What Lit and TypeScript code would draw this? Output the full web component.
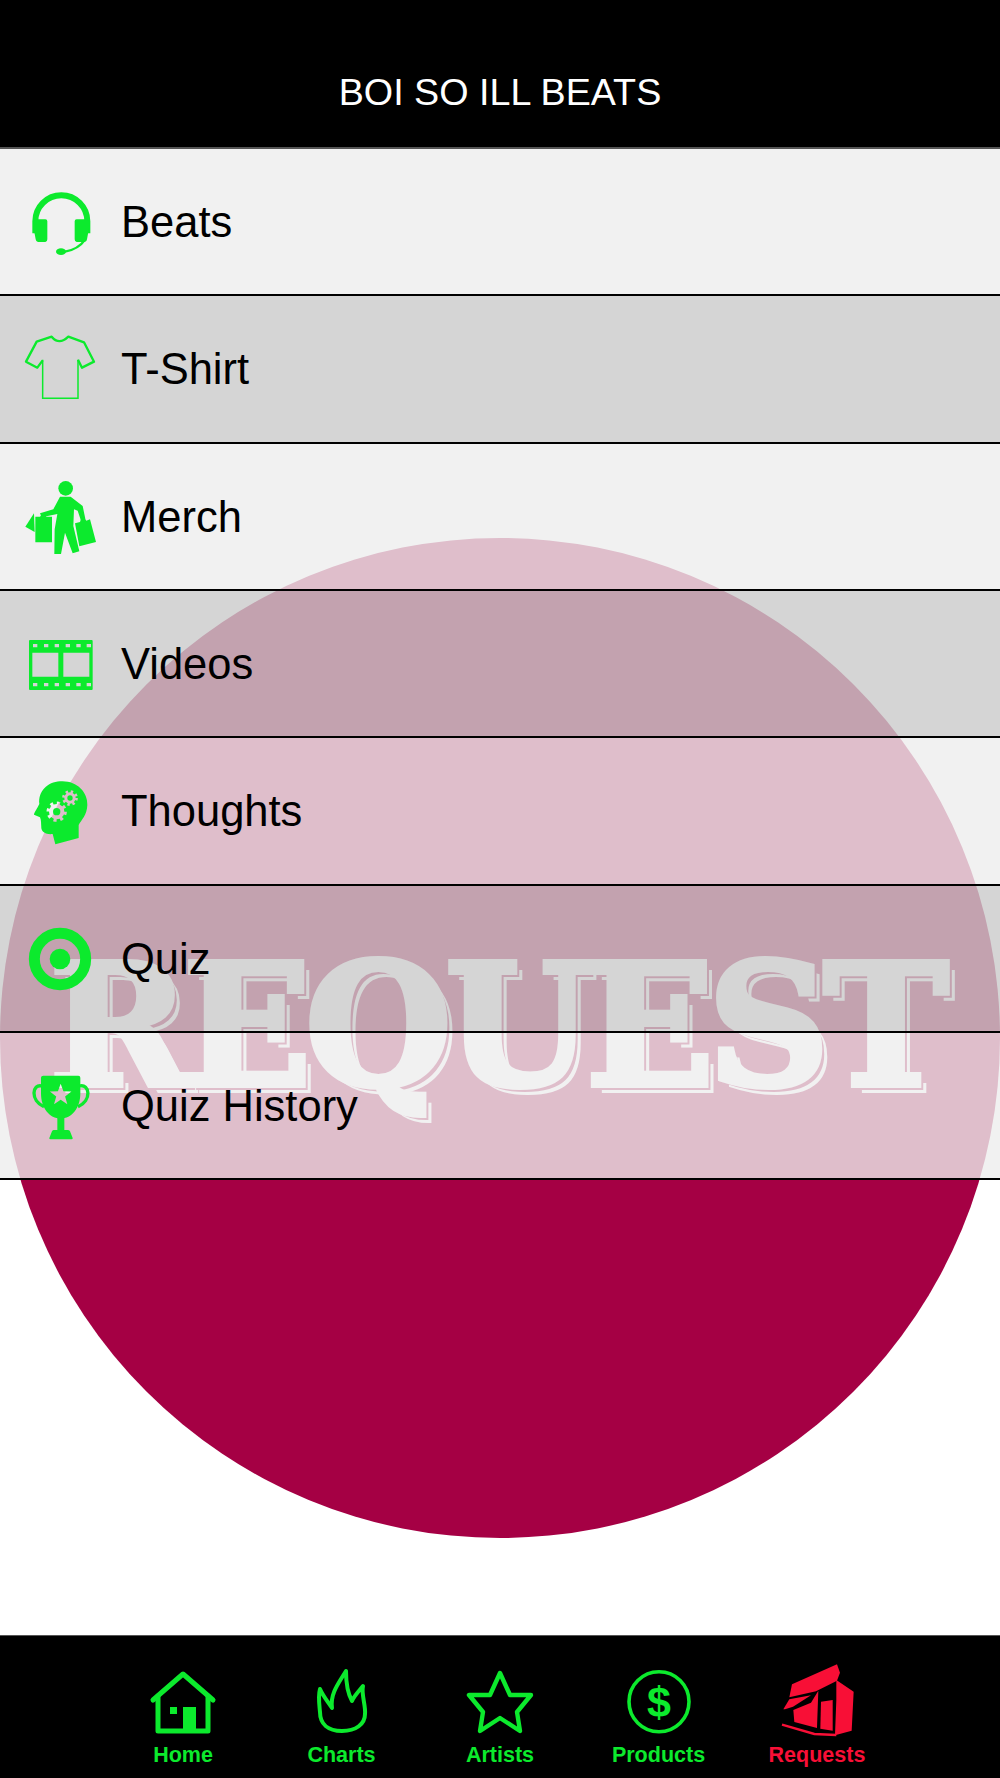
import { LitElement, html, css, svg } from "lit";
import { customElement } from "lit/decorators.js";

const G = "#0cea2d";
const R = "#f80f36";

const star = (cx: number, cy: number, r1: number, r2: number) =>
  Array.from({ length: 10 }, (_, i) => {
    const a = (-90 + 36 * i) * (Math.PI / 180);
    const r = i % 2 ? r2 : r1;
    return `${(cx + r * Math.cos(a)).toFixed(1)} ${(cy + r * Math.sin(a)).toFixed(1)}`;
  }).join(" L");

const filmPath = () => {
  let d = "M60 78 H245 Q248 78 248 81 V225 Q248 228 245 228 H60 Q57 228 57 225 V81 Q57 78 60 78Z ";
  d += "M67 116 H145 V188 H67Z M160 116 H238 V188 H160Z ";
  for (const x of [69, 102, 134, 167, 199, 230]) {
    for (const y of [90, 207]) d += `M${x} ${y} h13 v10 h-13Z `;
  }
  return d;
};

const box = (vy: number, body: unknown) => html`<svg class="row-icon" viewBox="0 ${vy} 300 300" fill=${G}>${body}</svg>`;

const rowIcons = [
  box(6, svg`
    <path d="M76 190 V154 A78 78 0 0 1 232 154 V190" fill="none" stroke=${G} stroke-width="18"/>
    <path d="M82 148 H106 Q112 148 112 154 V208 Q112 216 106 216 H84 Q78 216 77 208 L70 170 Q68 148 82 148Z"/>
    <path d="M200 148 H226 Q240 148 238 170 L231 208 Q230 216 224 216 H200 Q194 216 194 208 V154 Q194 148 200 148Z"/>
    <path d="M226 208 Q205 238 165 245" fill="none" stroke=${G} stroke-width="7"/>
    <ellipse cx="153" cy="245" rx="15" ry="10"/>`),
  box(0, svg`
    <path d="M98 124 L82 146 L48 128 L80 68 L125 53 Q147 80 175 53 L222 70 L252 128 L216 146 L204 122" fill="none" stroke=${G} stroke-width="7" stroke-linejoin="round"/>
    <path d="M98 122 V238 H204 V122" fill="none" stroke=${G} stroke-width="4.5"/>`),
  box(0, svg`
    <circle cx="167" cy="67" r="22"/>
    <path d="M150 92 H182 L218 120 L226 158 L212 161 L203 134 L192 130 L190 180 L208 256 L188 262 L165 200 L153 264 H133 L134 190 L142 144 L95 154 L90 142 L130 130Z"/>
    <path d="M76 152 H90 L96 143 L104 143 L109 152 H126 V229 H76Z"/>
    <path d="M46 182 L72 142 L74 198Z"/>
    <path d="M195 172 L210 168 L213 158 L224 156 L229 164 L240 160 L258 228 L208 241Z"/>`),
  box(0, svg`<path fill-rule="evenodd" d=${filmPath()}/>`),
  box(3, svg`
    <mask id="gears" maskUnits="userSpaceOnUse" x="0" y="0" width="300" height="320">
      <rect width="300" height="320" fill="#fff"/>
      <circle cx="140" cy="155" r="23" fill="#000"/>
      <circle cx="140" cy="155" r="25" fill="none" stroke="#000" stroke-width="11" stroke-dasharray="9 10.6"/>
      <circle cx="140" cy="155" r="11" fill="#fff"/>
      <circle cx="180" cy="114" r="17" fill="#000"/>
      <circle cx="180" cy="114" r="19" fill="none" stroke="#000" stroke-width="9" stroke-dasharray="7 7.9"/>
      <circle cx="180" cy="114" r="8" fill="#fff"/>
    </mask>
    <path mask="url(#gears)" d="M150 64 C198 60 234 95 232 135 C231 165 214 180 206 195 L206 234 L136 253 L128 222 C110 224 96 218 94 205 C93 192 94 180 90 172 L72 164 C72 158 82 145 88 132 C84 95 112 66 150 64Z"/>`),
  box(0, svg`
    <circle cx="150" cy="153" r="77" fill="none" stroke=${G} stroke-width="33"/>
    <circle cx="150" cy="153" r="31"/>`),
  box(-12, svg`
    <path fill-rule="evenodd" d="M100 47 H205 Q211 47 211 53 V100 C211 145 185 176 152 176 C119 176 93 145 93 100 V53 Q93 47 100 47Z M${star(152, 105, 34, 14)}Z"/>
    <path d="M96 78 C66 70 60 122 102 140 M208 78 C240 70 246 122 204 140" fill="none" stroke=${G} stroke-width="10"/>
    <path d="M142 172 H163 V210 H173 Q178 210 180 214 L188 234 Q189 238 184 238 H122 Q117 238 118 234 L126 214 Q128 210 132 210 H142Z"/>`),
];

const navIcons = [
  svg`<g fill="none" stroke=${G} stroke-width="5" stroke-linejoin="round" stroke-linecap="round">
      <path d="M-30 36 L0 10 L30 36"/>
      <path d="M-25 32 V67 H25 V32"/></g>
      <path d="M0 43 H13 V67 H0Z M-13 43 H-6 V50 H-13Z" fill=${G}/>`,
  svg`<path fill="none" stroke=${G} stroke-width="4" stroke-linejoin="round" d="M0 67 C-14 67 -22 60 -22 48 C-23 38 -24 32 -22 25 C-19 32 -14 38 -10 44 C-12 30 -4 20 4 7 C4 18 5 28 10 37 C12 32 17 27 21 22 C19 30 24 42 23 50 C23 60 14 67 0 67Z"/>`,
  svg`<path fill="none" stroke=${G} stroke-width="4.4" stroke-linejoin="round" d="M0 9 L10 31 L31 31 L17 48 L20 67 L0 54 L-20 67 L-17 48 L-31 31 L-10 31Z"/>`,
  svg`<ellipse cx="0" cy="37.7" rx="30" ry="30" fill="none" stroke=${G} stroke-width="3.6"/>
      <text x="0" y="53" text-anchor="middle" fill=${G} font-family="Liberation Sans, sans-serif" font-weight="700" font-size="43">$</text>`,
  svg`<g transform="translate(-56 -14) scale(.3333)" fill=${R}>
      <path d="M85 142 L93 103 L228 43 L237 68 L228 92 L165 124Z"/>
      <path d="M226 90 L278 125 L272 242 L222 256 L226 150Z"/>
      <path d="M97 180 L150 158 L172 122 L168 234 L100 216Z"/>
      <path d="M180 155 L215 150 L215 242 L178 236Z"/>
      <path d="M67 178 L85 148 L150 136 L96 170 L72 178Z"/>
      <path d="M63 224 L160 252 L226 255" fill="none" stroke=${R} stroke-width="7"/></g>`,
];

const rows = ["Beats", "T-Shirt", "Merch", "Videos", "Thoughts", "Quiz", "Quiz History"];
const tabs = ["Home", "Charts", "Artists", "Products", "Requests"];

@customElement("app-root")
export class AppRoot extends LitElement {
  static styles = css`
    :host { display: block; width: 1000px; height: 1778px; font-family: "Liberation Sans", Arial, sans-serif; }
    .page { display: flex; flex-direction: column; height: 100%; background: #fff; }
    .header {
      flex: none; height: 149px; box-sizing: border-box; padding-top: 37px;
      display: flex; align-items: center; justify-content: center;
      background: #000; color: #fff; font-size: 37.7px;
      border-bottom: 2px solid #555;
    }
    .main { flex: 1; position: relative; overflow: hidden; }
    .circle {
      position: absolute; left: 0; top: 389px; width: 1000px; height: 1000px; border-radius: 50%;
      background: #a50044; display: flex; align-items: center; justify-content: center;
    }
    .stamp {
      font-family: "DejaVu Serif", serif; font-weight: 700; font-size: 168px; line-height: 1;
      color: #fff; white-space: nowrap; padding: 0 8px 24px 0; letter-spacing: -6px;
      -webkit-text-stroke: 6px #fff;
      text-shadow: 5px 5px 0 #a50044, 8px 8px 0 #fff;
    }
    .list { position: relative; display: flex; flex-direction: column; }
    .row {
      height: 147.33px; box-sizing: border-box; border-bottom: 2px solid #000;
      display: flex; align-items: center; padding-left: 10px;
      background: rgba(238, 238, 238, .8); color: #000; font-size: 43.5px;
    }
    .row span { padding-top: 2px; }
    .row.dark { background: rgba(202, 202, 202, .8); }
    .row-icon { width: 100px; height: 100px; flex: none; margin-right: 11px; overflow: visible; }
    .tabs {
      flex: none; height: 143px; box-sizing: border-box; background: #000;
      border-top: 1px solid #555; padding-top: 28px;
      display: flex; justify-content: center;
    }
    .tab {
      width: 158.5px; display: flex; flex-direction: column; align-items: center;
      color: #0cea2d; font-weight: 700; font-size: 21.5px; line-height: 30px;
    }
    .tab.on { color: #f80f36; }
    .tab svg { width: 90px; height: 76px; flex: none; }
  `;

  render() {
    return html`<div class="page">
      <div class="header">BOI SO ILL BEATS</div>
      <div class="main">
        <div class="circle"><div class="stamp">REQUEST</div></div>
        <div class="list">
          ${rows.map((r, i) => html`<div class="row ${i % 2 ? "dark" : ""}">${rowIcons[i]}<span>${r}</span></div>`)}
        </div>
      </div>
      <div class="tabs">
        ${tabs.map((t, i) => html`<div class="tab ${i === 4 ? "on" : ""}">
          <svg viewBox="-45 0 90 76">${navIcons[i]}</svg><span>${t}</span>
        </div>`)}
      </div>
    </div>`;
  }
}
